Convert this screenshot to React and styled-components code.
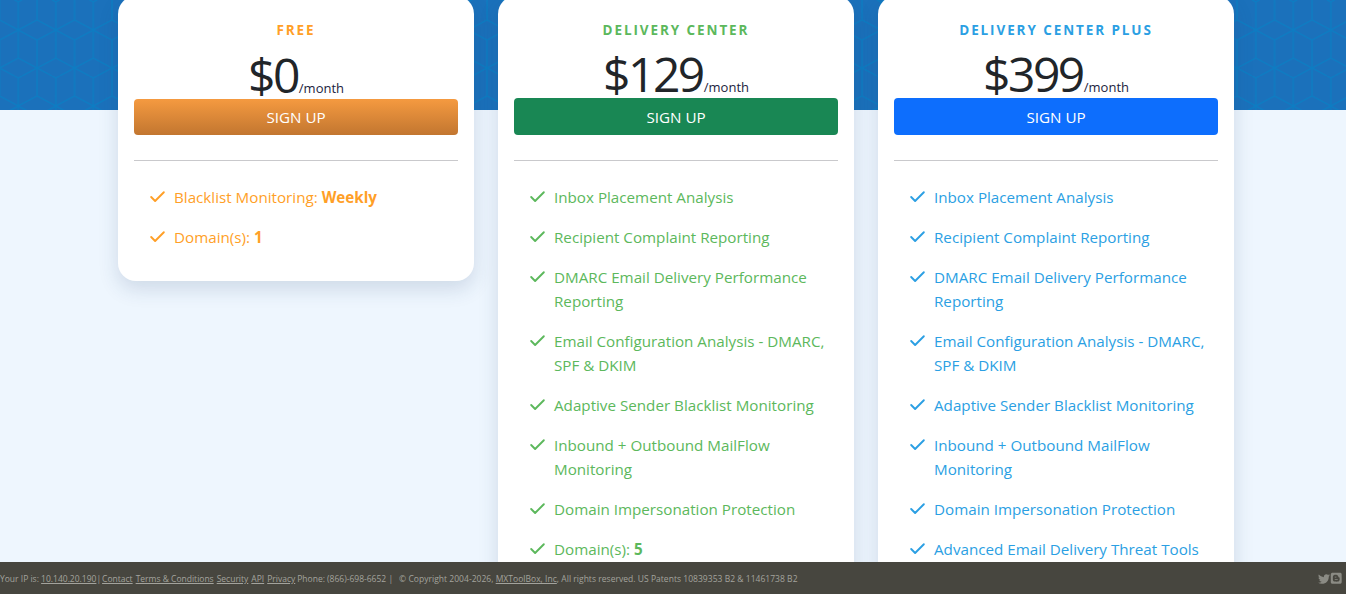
import React from 'react';
import styled, { createGlobalStyle } from 'styled-components';
import { Check } from 'lucide-react';
import { FaTwitter, FaBlogger } from 'react-icons/fa';

const GlobalStyle = createGlobalStyle`
  html, body {
    margin: 0;
    height: 100%;
    overflow: hidden;
  }
  body {
    background: #eef6fe;
    font-family: "Open Sans", "Noto Sans", "Liberation Sans", sans-serif;
  }
`;

const PLANS = [
  {
    key: 'free',
    name: 'FREE',
    price: '$0',
    color: '#ff9f27',
    items: [
      <>Blacklist Monitoring: <b>Weekly</b></>,
      <>Domain(s): <b>1</b></>,
    ],
  },
  {
    key: 'center',
    name: 'DELIVERY CENTER',
    price: '$129',
    color: '#5cb85c',
    items: [
      'Inbox Placement Analysis',
      'Recipient Complaint Reporting',
      'DMARC Email Delivery Performance Reporting',
      'Email Configuration Analysis - DMARC, SPF & DKIM',
      'Adaptive Sender Blacklist Monitoring',
      'Inbound + Outbound MailFlow Monitoring',
      'Domain Impersonation Protection',
      <>Domain(s): <b>5</b></>,
    ],
  },
  {
    key: 'plus',
    name: 'DELIVERY CENTER PLUS',
    price: '$399',
    color: '#2b9fe3',
    items: [
      'Inbox Placement Analysis',
      'Recipient Complaint Reporting',
      'DMARC Email Delivery Performance Reporting',
      'Email Configuration Analysis - DMARC, SPF & DKIM',
      'Adaptive Sender Blacklist Monitoring',
      'Inbound + Outbound MailFlow Monitoring',
      'Domain Impersonation Protection',
      'Advanced Email Delivery Threat Tools',
    ],
  },
];

const BUTTON_FILL = {
  free: 'linear-gradient(#f59a40, #c27630)',
  center: '#198754',
  plus: '#0d6efd',
};

const Banner = styled.div`
  height: 110px;
  background: #1b71bb;
  overflow: hidden;
  svg {
    display: block;
    width: 100%;
    height: 100%;
  }
`;

const PlanRow = styled.main`
  display: flex;
  align-items: flex-start;
  gap: 24px;
  margin-top: -114px;
  padding-left: 118px;
`;

const Card = styled.section`
  width: 356px;
  box-sizing: border-box;
  padding: 0 16px 32px;
  background: #fff;
  border-radius: 18px;
  box-shadow: 0 8px 20px rgba(40, 70, 110, 0.16);
`;

const PlanName = styled.h3`
  margin: 0;
  padding-top: 25px;
  text-align: center;
  font-size: 13.5px;
  line-height: 18px;
  font-weight: 700;
  letter-spacing: 1.9px;
  color: ${(p) => p.$color};
`;

const PriceLine = styled.div`
  display: flex;
  justify-content: center;
  align-items: baseline;
  height: 59px;
  margin-top: ${(p) => (p.$free ? '1px' : '0')};
  color: #212529;
`;

const Amount = styled.span`
  font-size: 48px;
  line-height: 70px;
  letter-spacing: -2.5px;
`;

const Per = styled.span`
  margin-left: 1px;
  font-size: 13px;
  font-weight: 500;
  color: #1c2340;
`;

const SignUp = styled.a`
  display: block;
  height: ${(p) => (p.$plan === 'free' ? '36px' : '37px')};
  line-height: ${(p) => (p.$plan === 'free' ? '36px' : '38px')};
  border-radius: 4px;
  text-align: center;
  font-size: 15.2px;
  color: #fff;
  background: ${(p) => BUTTON_FILL[p.$plan]};
`;

const Rule = styled.hr`
  margin: 25px 0 0;
  border: 0;
  border-top: 1px solid #c9c9cc;
`;

const Features = styled.ul`
  list-style: none;
  margin: 0;
  padding: 24px 0 0 16px;
  display: flex;
  flex-direction: column;
  gap: 16px;
`;

const Feature = styled.li`
  display: flex;
  align-items: flex-start;
  gap: 9px;
  font-size: 15.2px;
  line-height: 24px;
  color: ${(p) => p.$color};
  b {
    font-weight: 700;
  }
  svg {
    flex: none;
    width: 19px;
    height: 24px;
    margin: 0 -2px;
  }
`;

const Footer = styled.footer`
  position: fixed;
  left: 0;
  right: 0;
  bottom: 0;
  height: 32px;
  box-sizing: border-box;
  padding-top: 1px;
  display: flex;
  align-items: center;
  justify-content: space-between;
  background: #47463f;
  color: #a3a39d;
  font-size: 8.5px;
  white-space: nowrap;
  a {
    color: inherit;
    text-decoration: underline;
  }
`;

const FooterLinks = styled.div`
  display: flex;
  gap: 3px;
`;

const IpNote = styled.span`
  margin-right: -2px;
`;

const Phone = styled.span`
  margin: 0 3px 0 -1px;
`;

const Copyright = styled.span`
  letter-spacing: 0.03px;
`;

const Social = styled.div`
  display: flex;
  align-items: center;
  padding-right: 4px;
  color: #8b8b84;
`;

function HexPattern() {
  return (
    <svg aria-hidden="true">
      <defs>
        <pattern id="cubes" width="37.5" height="76" patternUnits="userSpaceOnUse" patternTransform="translate(18.3 0)">
          <path
            d="M0 30L18.75 20L37.5 30L18.75 40ZM18.75 40V68M0 2V58M37.5 2V58M18.75 0V20M18.75 68V76M0 58L18.75 68L37.5 58M3.75 76L18.75 68L33.75 76M0 2L3.75 0M37.5 2L33.75 0"
            fill="none"
            stroke="#0c7dc3"
            strokeWidth="1.3"
          />
        </pattern>
      </defs>
      <rect width="100%" height="100%" fill="url(#cubes)" />
    </svg>
  );
}

function PlanCard({ plan }) {
  return (
    <Card>
      <PlanName $color={plan.color}>{plan.name}</PlanName>
      <PriceLine $free={plan.key === 'free'}>
        <Amount>{plan.price}</Amount>
        <Per>/month</Per>
      </PriceLine>
      <SignUp $plan={plan.key}>SIGN UP</SignUp>
      <Rule />
      <Features>
        {plan.items.map((item, i) => (
          <Feature key={i} $color={plan.color}>
            <Check strokeWidth={2.4} absoluteStrokeWidth />
            <span>{item}</span>
          </Feature>
        ))}
      </Features>
    </Card>
  );
}

export default function App() {
  return (
    <>
      <GlobalStyle />
      <Banner>
        <HexPattern />
      </Banner>
      <PlanRow>
        {PLANS.map((plan) => (
          <PlanCard key={plan.key} plan={plan} />
        ))}
      </PlanRow>
      <Footer>
        <FooterLinks>
          <IpNote>Your IP is: <a>10.140.20.190</a>|</IpNote>
          <a>Contact</a>
          <a>Terms &amp; Conditions</a>
          <a>Security</a>
          <a>API</a>
          <a>Privacy</a>
          <Phone>Phone: (866)-698-6652 |</Phone>
          <Copyright>© Copyright 2004-2026, <a>MXToolBox, Inc</a>, All rights reserved. US Patents 10839353 B2 &amp; 11461738 B2</Copyright>
        </FooterLinks>
        <Social>
          <FaTwitter size={12} />
          <FaBlogger size={12.5} />
        </Social>
      </Footer>
    </>
  );
}
